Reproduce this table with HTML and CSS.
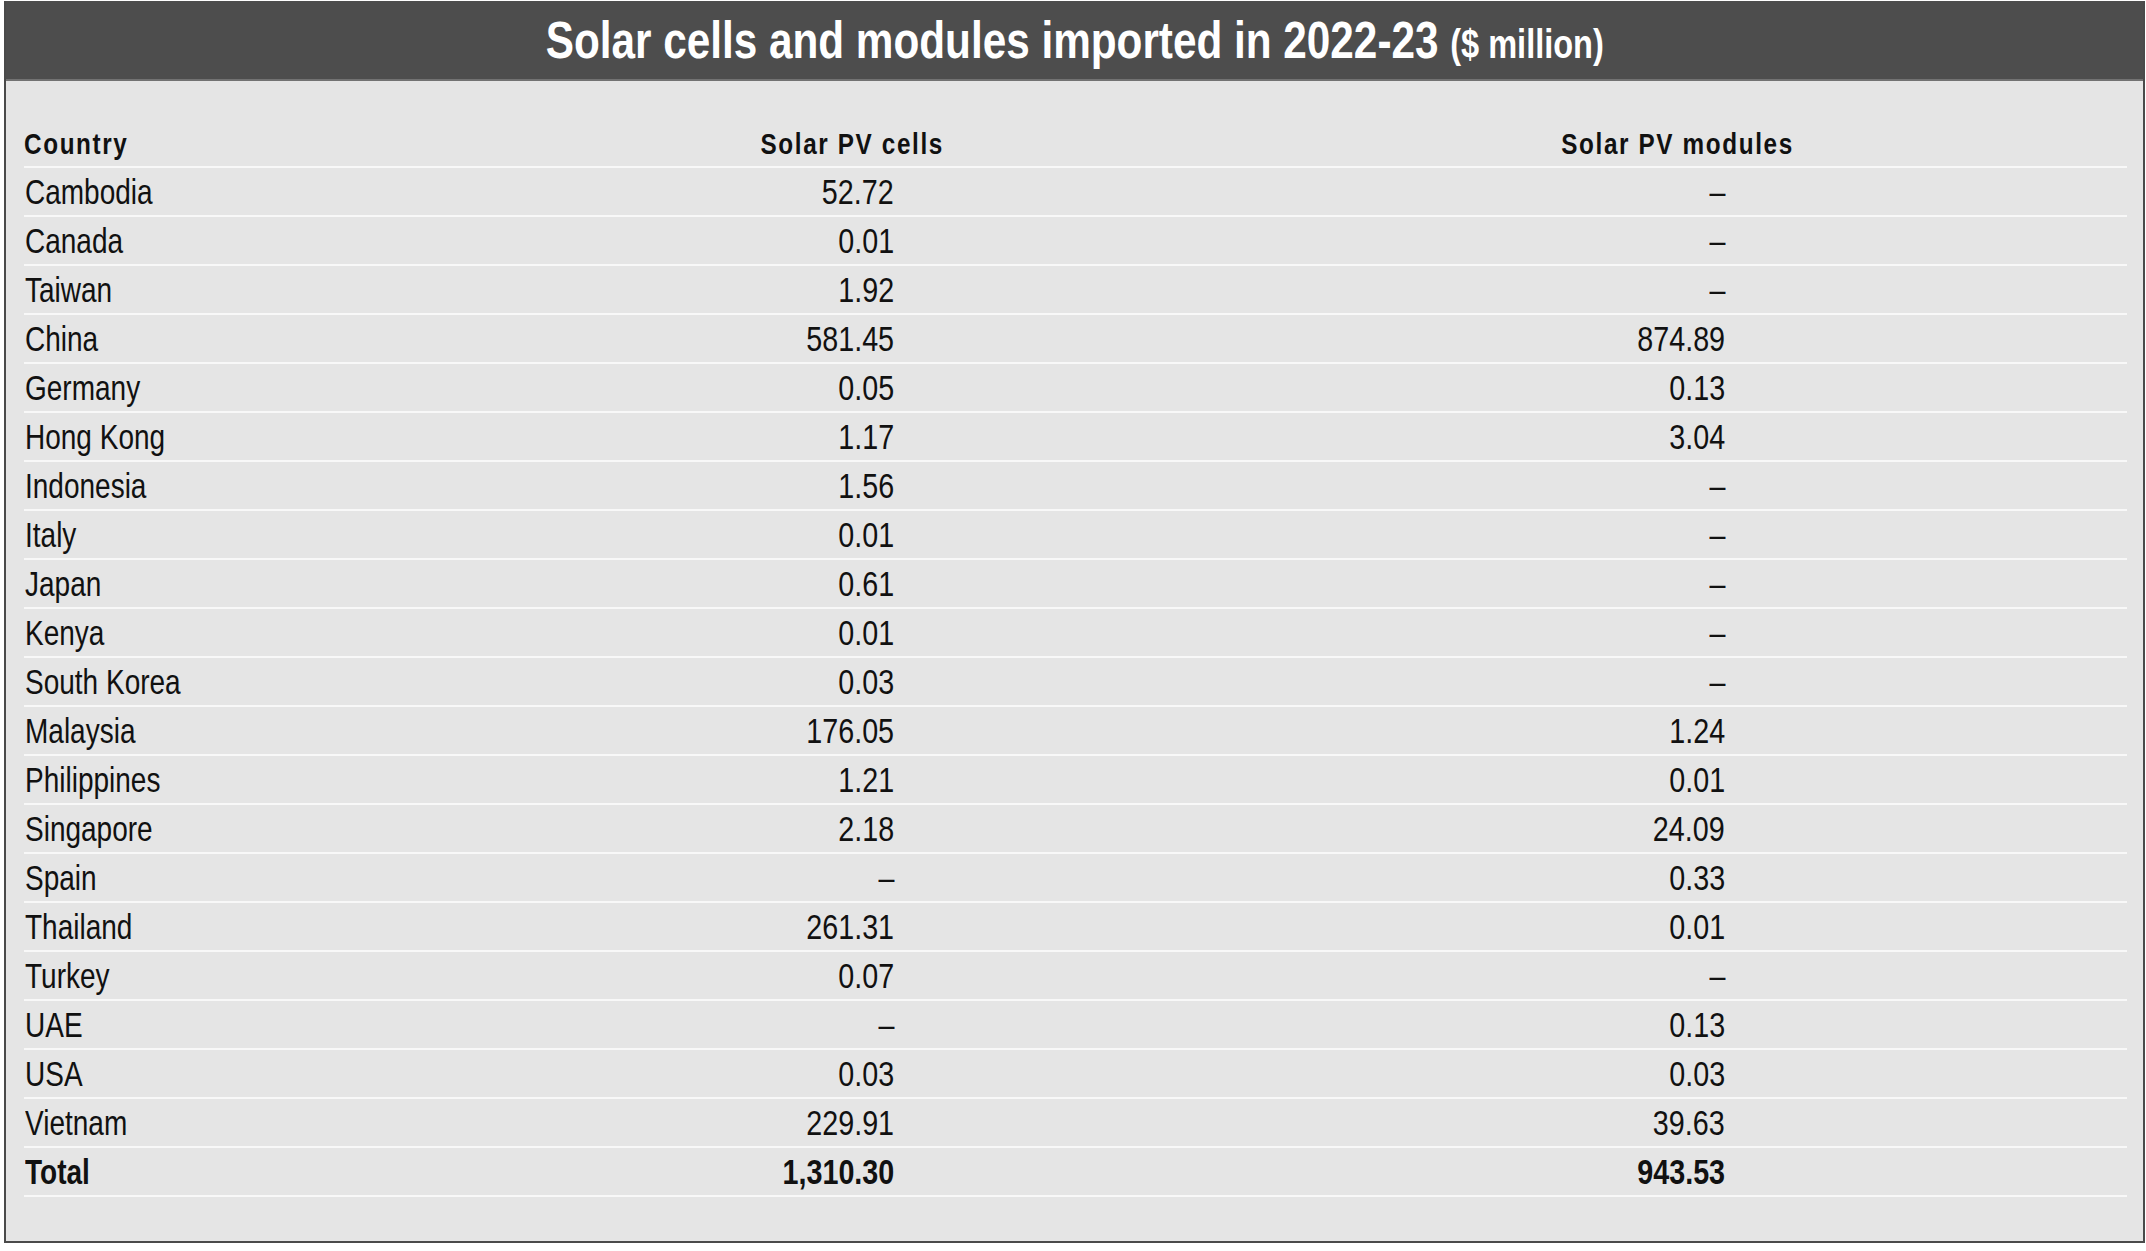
FILE: index.html
```html
<!DOCTYPE html>
<html lang="en">
<head>
<meta charset="utf-8">
<title>Solar cells and modules imported in 2022-23</title>
<link rel="stylesheet" href="styles.css">
</head>
<body>
<div class="card">
  <header class="banner">
    <h1 class="title"><span class="nar">Solar cells and modules imported in 2022-23 <span class="unit">($ million)</span></span></h1>
  </header>
  <table class="data">
    <colgroup>
      <col class="c-country">
      <col class="c-cells">
      <col class="c-modules">
    </colgroup>
    <thead>
      <tr>
        <th class="h-country"><span class="nar">Country</span></th>
        <th class="h-cells"><span class="nar">Solar PV cells</span></th>
        <th class="h-modules"><span class="nar">Solar PV modules</span></th>
      </tr>
    </thead>
    <tbody>
      <tr><td><span class="nar">Cambodia</span></td><td class="v-cells"><span class="nar">52.72</span></td><td class="v-modules"><span class="nar">–</span></td></tr>
      <tr><td><span class="nar">Canada</span></td><td class="v-cells"><span class="nar">0.01</span></td><td class="v-modules"><span class="nar">–</span></td></tr>
      <tr><td><span class="nar">Taiwan</span></td><td class="v-cells"><span class="nar">1.92</span></td><td class="v-modules"><span class="nar">–</span></td></tr>
      <tr><td><span class="nar">China</span></td><td class="v-cells"><span class="nar">581.45</span></td><td class="v-modules"><span class="nar">874.89</span></td></tr>
      <tr><td><span class="nar">Germany</span></td><td class="v-cells"><span class="nar">0.05</span></td><td class="v-modules"><span class="nar">0.13</span></td></tr>
      <tr><td><span class="nar">Hong Kong</span></td><td class="v-cells"><span class="nar">1.17</span></td><td class="v-modules"><span class="nar">3.04</span></td></tr>
      <tr><td><span class="nar">Indonesia</span></td><td class="v-cells"><span class="nar">1.56</span></td><td class="v-modules"><span class="nar">–</span></td></tr>
      <tr><td><span class="nar">Italy</span></td><td class="v-cells"><span class="nar">0.01</span></td><td class="v-modules"><span class="nar">–</span></td></tr>
      <tr><td><span class="nar">Japan</span></td><td class="v-cells"><span class="nar">0.61</span></td><td class="v-modules"><span class="nar">–</span></td></tr>
      <tr><td><span class="nar">Kenya</span></td><td class="v-cells"><span class="nar">0.01</span></td><td class="v-modules"><span class="nar">–</span></td></tr>
      <tr><td><span class="nar">South Korea</span></td><td class="v-cells"><span class="nar">0.03</span></td><td class="v-modules"><span class="nar">–</span></td></tr>
      <tr><td><span class="nar">Malaysia</span></td><td class="v-cells"><span class="nar">176.05</span></td><td class="v-modules"><span class="nar">1.24</span></td></tr>
      <tr><td><span class="nar">Philippines</span></td><td class="v-cells"><span class="nar">1.21</span></td><td class="v-modules"><span class="nar">0.01</span></td></tr>
      <tr><td><span class="nar">Singapore</span></td><td class="v-cells"><span class="nar">2.18</span></td><td class="v-modules"><span class="nar">24.09</span></td></tr>
      <tr><td><span class="nar">Spain</span></td><td class="v-cells"><span class="nar">–</span></td><td class="v-modules"><span class="nar">0.33</span></td></tr>
      <tr><td><span class="nar">Thailand</span></td><td class="v-cells"><span class="nar">261.31</span></td><td class="v-modules"><span class="nar">0.01</span></td></tr>
      <tr><td><span class="nar">Turkey</span></td><td class="v-cells"><span class="nar">0.07</span></td><td class="v-modules"><span class="nar">–</span></td></tr>
      <tr><td><span class="nar">UAE</span></td><td class="v-cells"><span class="nar">–</span></td><td class="v-modules"><span class="nar">0.13</span></td></tr>
      <tr><td><span class="nar">USA</span></td><td class="v-cells"><span class="nar">0.03</span></td><td class="v-modules"><span class="nar">0.03</span></td></tr>
      <tr><td><span class="nar">Vietnam</span></td><td class="v-cells"><span class="nar">229.91</span></td><td class="v-modules"><span class="nar">39.63</span></td></tr>
      <tr class="total"><td><span class="nar">Total</span></td><td class="v-cells"><span class="nar">1,310.30</span></td><td class="v-modules"><span class="nar">943.53</span></td></tr>
    </tbody>
  </table>
</div>
</body>
</html>
```

FILE: styles.css
```css
html, body {
  margin: 0;
  padding: 0;
  background: #ffffff;
}

body {
  font-family: "Liberation Sans", Arial, sans-serif;
  color: #111111;
}

/* Arial-width glyphs condensed to Arial Narrow proportions */
.nar {
  display: inline-block;
  transform: scaleX(0.82);
  transform-origin: left center;
}

.card {
  margin: 1px 0 0 4px;
  width: calc(100% - 5px);
  box-sizing: border-box;
  background: #e5e5e5;
  border-left: 2px solid #4a4a4a;
  border-right: 2px solid #4a4a4a;
  border-bottom: 2px solid #4a4a4a;
  padding: 0 16px 44px 18px;
}

.banner {
  margin: 0 -16px 0 -18px;
  height: 78px;
  background: #4d4d4d;
  border-bottom: 2px solid #727272;
  display: flex;
  justify-content: center;
}

.title {
  margin: 0;
  font-size: 52px;
  line-height: 78px;
  font-weight: bold;
  color: #ffffff;
  white-space: nowrap;
}

.title .nar {
  transform: scaleX(0.813);
  transform-origin: center center;
}

.unit {
  font-size: 40px;
}

.data {
  width: 100%;
  border-collapse: collapse;
  table-layout: fixed;
}

.c-country { width: 636px; }
.c-cells { width: 384px; }

.data th {
  height: 86px;
  padding: 0 0 7px 0;
  box-sizing: border-box;
  vertical-align: bottom;
  font-size: 30px;
  line-height: 30px;
  font-weight: bold;
  letter-spacing: 2px;
  color: #111111;
  border-bottom: 2px solid #f8f8f8;
  white-space: nowrap;
}

.data th .nar {
  transform: scaleX(0.81);
}

.h-country {
  text-align: left;
  padding-left: 1px;
}

.h-cells {
  text-align: center;
}

.h-cells .nar,
.h-modules .nar {
  transform-origin: center center;
}

.h-modules {
  text-align: center;
  padding-left: 185px !important;
}

.data td {
  height: 46px;
  padding: 1px 0 0 0;
  font-size: 35px;
  line-height: 46px;
  border-bottom: 2px solid #f8f8f8;
  white-space: nowrap;
}

.data td:first-child {
  padding-left: 1px;
}

.data td:first-child .nar {
  transform: scaleX(0.80);
}

.v-cells {
  text-align: right;
  padding-right: 150px !important;
}

.v-modules {
  text-align: right;
  padding-right: 402px !important;
}

.v-cells .nar,
.v-modules .nar {
  transform-origin: right center;
}

.total td {
  font-weight: bold;
}
```
